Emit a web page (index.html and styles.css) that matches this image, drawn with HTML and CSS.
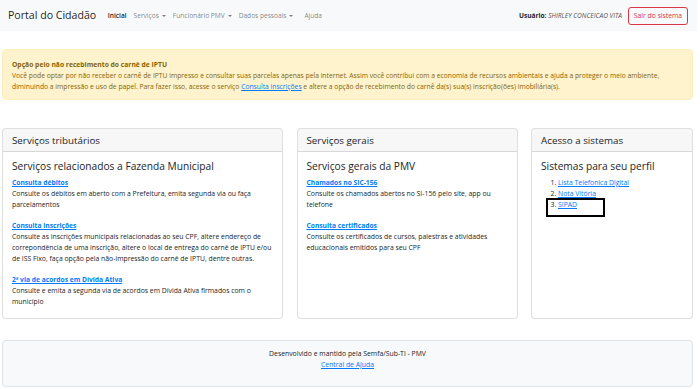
FILE: index.html
```html
<!DOCTYPE html>
<html lang="pt-BR">
<head>
<meta charset="utf-8">
<title>Portal do Cidadão</title>
<link rel="stylesheet" href="styles.css">
</head>
<body>
<nav class="navbar">
  <a class="brand" href="#">Portal do Cidadão</a>
  <ul class="nav">
    <li><a class="nav-link active" href="#">Inicial</a></li>
    <li><a class="nav-link dropdown" href="#">Serviços</a></li>
    <li><a class="nav-link dropdown" href="#">Funcionário PMV</a></li>
    <li><a class="nav-link dropdown" href="#">Dados pessoais</a></li>
    <li><a class="nav-link" href="#">Ajuda</a></li>
  </ul>
  <div class="user">
    <span class="user-label">Usuário:</span> <em class="user-name">SHIRLEY CONCEICAO VITA</em>
  </div>
  <button class="btn-logout" type="button">Sair do sistema</button>
</nav>

<main class="main">
  <div class="alert">
    <div class="alert-title">Opção pelo não recebimento do carnê de IPTU</div>
    <div>Você pode optar por não receber o carnê de IPTU impresso e consultar suas parcelas apenas pela internet. Assim você contribui com a economia de recursos ambientais e ajuda a proteger o meio ambiente, diminuindo a impressão e uso de papel. Para fazer isso, acesse o serviço <a href="#">Consulta inscrições</a> e altere a opção de recebimento do carnê da(s) sua(s) inscrição(ões) imobiliária(s).</div>
  </div>

  <div class="cards">
    <section class="card">
      <div class="card-header">Serviços tributários</div>
      <div class="card-body">
        <h3 class="card-title">Serviços relacionados a Fazenda Municipal</h3>
        <div class="item">
          <a class="item-link" href="#">Consulta débitos</a>
          <div>Consulte os débitos em aberto com a Prefeitura, emita segunda via ou faça parcelamentos</div>
        </div>
        <div class="item">
          <a class="item-link" href="#">Consulta inscrições</a>
          <div>Consulte as inscrições municipais relacionadas ao seu CPF, altere endereço de correpondência de uma inscrição, altere o local de entrega do carnê de IPTU e/ou de ISS Fixo, faça opção pela não-impressão do carnê de IPTU, dentre outras.</div>
        </div>
        <div class="item">
          <a class="item-link" href="#">2ª via de acordos em Dívida Ativa</a>
          <div>Consulte e emita a segunda via de acordos em Dívida Ativa firmados com o município</div>
        </div>
      </div>
    </section>

    <section class="card">
      <div class="card-header">Serviços gerais</div>
      <div class="card-body">
        <h3 class="card-title">Serviços gerais da PMV</h3>
        <div class="item">
          <a class="item-link" href="#">Chamados no SIC-156</a>
          <div>Consulte os chamados abertos no SI-156 pelo site, app ou telefone</div>
        </div>
        <div class="item">
          <a class="item-link" href="#">Consulta certificados</a>
          <div>Consulte os certificados de cursos, palestras e atividades educacionais emitidos para seu CPF</div>
        </div>
      </div>
    </section>

    <section class="card">
      <div class="card-header">Acesso a sistemas</div>
      <div class="card-body">
        <h3 class="card-title">Sistemas para seu perfil</h3>
        <ol class="systems">
          <li><a href="#">Lista Telefonica Digital</a></li>
          <li><a href="#">Nota Vitória</a></li>
          <li class="marked"><a href="#">SIPAD</a><span class="highlight-box"></span></li>
        </ol>
      </div>
    </section>
  </div>

  <footer class="footer">
    <div>Desenvolvido e mantido pela Semfa/Sub-TI - PMV</div>
    <a href="#">Central de Ajuda</a>
  </footer>
</main>
</body>
</html>
```

FILE: styles.css
```css
* { box-sizing: border-box; }

html, body {
  margin: 0;
  padding: 0;
  background: #fff;
}

body {
  font-family: "Open Sans", "Noto Sans", sans-serif;
  font-size: 6.85px;
  line-height: 11px;
  color: #212529;
}

a { color: #007bff; text-decoration: underline; }

/* Navbar */
.navbar {
  display: flex;
  align-items: center;
  height: 31px;
  width: 697px;
  padding: 0 9px 0 8px;
  background: #f8f9fa;
  font-size: 6.6px;
}

.brand {
  font-size: 10.6px;
  color: rgba(0, 0, 0, 0.9);
  text-decoration: none;
  margin-right: 8px;
}

.nav {
  display: flex;
  list-style: none;
  margin: 0;
  padding: 0;
}

.nav-link {
  display: block;
  padding: 0 3.5px;
  color: rgba(0, 0, 0, 0.5);
  text-decoration: none;
}

.nav-link.active {
  color: rgba(0, 0, 0, 0.9);
  font-weight: 600;
}

.nav-link.dropdown::after {
  content: "";
  display: inline-block;
  margin-left: 3px;
  vertical-align: 1.5px;
  border-top: 2.5px solid rgba(0, 0, 0, 0.5);
  border-left: 2.3px solid transparent;
  border-right: 2.3px solid transparent;
}

.nav li:last-child { margin-left: 4px; }

.user {
  margin-left: auto;
  color: #212529;
}

.user-label { font-weight: 700; }
.user-name { color: #555; }

.btn-logout {
  margin-left: 6px;
  height: 18px;
  width: 60px;
  padding: 0;
  font-family: inherit;
  font-size: 6.8px;
  color: #dc3545;
  background: transparent;
  border: 1px solid #dc3545;
  border-radius: 3px;
}

/* Main */
.main {
  margin: 0 7px 0 2px;
}

.alert {
  margin-top: 18px;
  padding: 9px 9px 7px;
  background: #fff3cd;
  border: 1px solid #ffeeba;
  border-radius: 4px;
  color: #856404;
  font-size: 6.75px;
  line-height: 11px;
}

.alert-title { font-weight: 700; }

/* Cards */
.cards {
  display: grid;
  grid-template-columns: 281px 221px 162px;
  column-gap: 13.5px;
  margin-top: 28px;
}

.card {
  height: 191px;
  border: 1px solid rgba(0, 0, 0, 0.125);
  border-radius: 4px;
  background: #fff;
  overflow: hidden;
}

.card-header {
  display: flex;
  align-items: center;
  height: 23px;
  padding: 0 9px;
  background: rgba(0, 0, 0, 0.03);
  border-bottom: 1px solid rgba(0, 0, 0, 0.125);
  font-size: 9.8px;
}

.card-body {
  padding: 7px 4px 9px 9px;
}

.card-title {
  margin: 0 0 4px;
  font-size: 10.2px;
  line-height: 14px;
  font-weight: 500;
}

.item { margin-bottom: 10px; }

.item-link {
  font-size: 6.7px;
  font-weight: 700;
}

.systems {
  margin: 0;
  padding-left: 17px;
}

.marked { position: relative; }

.highlight-box {
  position: absolute;
  left: -12px;
  top: -1px;
  width: 59px;
  height: 19px;
  border: 2.5px solid #000;
}

/* Footer */
.footer {
  margin-top: 21px;
  height: 47px;
  padding-top: 7px;
  text-align: center;
  background: #f8f9fa;
  border: 1px solid #dee2e6;
  border-radius: 4px;
}
```
